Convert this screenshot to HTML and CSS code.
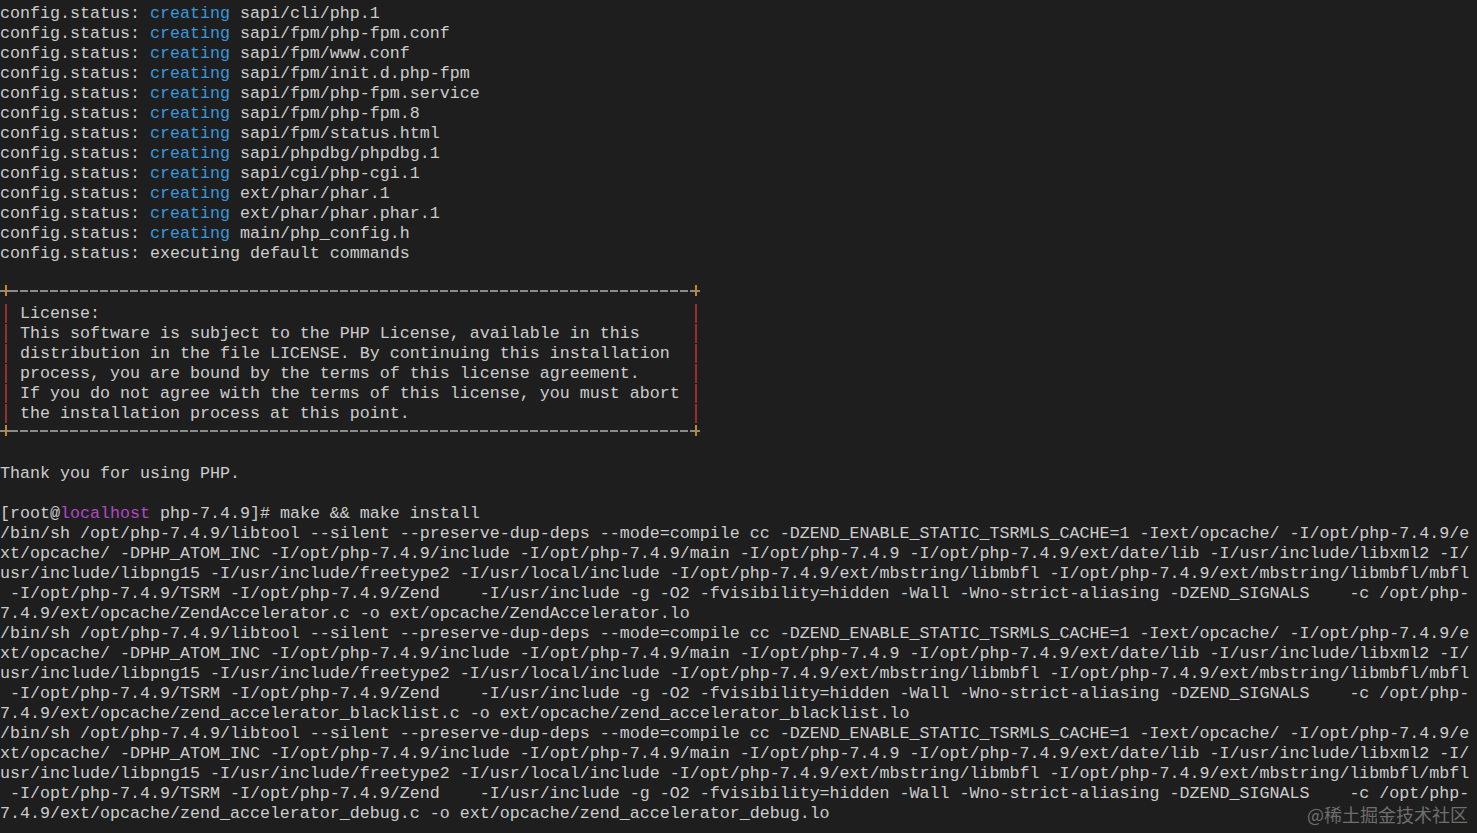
FILE: index.html
```html
<!DOCTYPE html>
<html lang="en">
<head>
<meta charset="utf-8">
<title>terminal</title>
<link rel="stylesheet" href="styles.css">
</head>
<body>
<main class="term">
<div class="line">config.status: <span class="cy">creating</span> sapi/cli/php.1</div>
<div class="line">config.status: <span class="cy">creating</span> sapi/fpm/php-fpm.conf</div>
<div class="line">config.status: <span class="cy">creating</span> sapi/fpm/www.conf</div>
<div class="line">config.status: <span class="cy">creating</span> sapi/fpm/init.d.php-fpm</div>
<div class="line">config.status: <span class="cy">creating</span> sapi/fpm/php-fpm.service</div>
<div class="line">config.status: <span class="cy">creating</span> sapi/fpm/php-fpm.8</div>
<div class="line">config.status: <span class="cy">creating</span> sapi/fpm/status.html</div>
<div class="line">config.status: <span class="cy">creating</span> sapi/phpdbg/phpdbg.1</div>
<div class="line">config.status: <span class="cy">creating</span> sapi/cgi/php-cgi.1</div>
<div class="line">config.status: <span class="cy">creating</span> ext/phar/phar.1</div>
<div class="line">config.status: <span class="cy">creating</span> ext/phar/phar.phar.1</div>
<div class="line">config.status: <span class="cy">creating</span> main/php_config.h</div>
<div class="line">config.status: executing default commands</div>
<div class="line"> </div>
<div class="line"><span class="plus"></span><span class="dash"></span><span class="plus"></span></div>
<div class="line"><span class="vb"></span> License:                                                           <span class="vb"></span></div>
<div class="line"><span class="vb"></span> This software is subject to the PHP License, available in this     <span class="vb"></span></div>
<div class="line"><span class="vb"></span> distribution in the file LICENSE. By continuing this installation  <span class="vb"></span></div>
<div class="line"><span class="vb"></span> process, you are bound by the terms of this license agreement.     <span class="vb"></span></div>
<div class="line"><span class="vb"></span> If you do not agree with the terms of this license, you must abort <span class="vb"></span></div>
<div class="line"><span class="vb"></span> the installation process at this point.                            <span class="vb"></span></div>
<div class="line"><span class="plus"></span><span class="dash"></span><span class="plus"></span></div>
<div class="line"> </div>
<div class="line">Thank you for using PHP.</div>
<div class="line"> </div>
<div class="line">[root@<span class="mg">localhost</span> php-7.4.9]# make &amp;&amp; make install</div>
<div class="line">/bin/sh /opt/php-7.4.9/libtool --silent --preserve-dup-deps --mode=compile cc -DZEND_ENABLE_STATIC_TSRMLS_CACHE=1 -Iext/opcache/ -I/opt/php-7.4.9/e</div>
<div class="line">xt/opcache/ -DPHP_ATOM_INC -I/opt/php-7.4.9/include -I/opt/php-7.4.9/main -I/opt/php-7.4.9 -I/opt/php-7.4.9/ext/date/lib -I/usr/include/libxml2 -I/</div>
<div class="line">usr/include/libpng15 -I/usr/include/freetype2 -I/usr/local/include -I/opt/php-7.4.9/ext/mbstring/libmbfl -I/opt/php-7.4.9/ext/mbstring/libmbfl/mbfl</div>
<div class="line"> -I/opt/php-7.4.9/TSRM -I/opt/php-7.4.9/Zend    -I/usr/include -g -O2 -fvisibility=hidden -Wall -Wno-strict-aliasing -DZEND_SIGNALS    -c /opt/php-</div>
<div class="line">7.4.9/ext/opcache/ZendAccelerator.c -o ext/opcache/ZendAccelerator.lo</div>
<div class="line">/bin/sh /opt/php-7.4.9/libtool --silent --preserve-dup-deps --mode=compile cc -DZEND_ENABLE_STATIC_TSRMLS_CACHE=1 -Iext/opcache/ -I/opt/php-7.4.9/e</div>
<div class="line">xt/opcache/ -DPHP_ATOM_INC -I/opt/php-7.4.9/include -I/opt/php-7.4.9/main -I/opt/php-7.4.9 -I/opt/php-7.4.9/ext/date/lib -I/usr/include/libxml2 -I/</div>
<div class="line">usr/include/libpng15 -I/usr/include/freetype2 -I/usr/local/include -I/opt/php-7.4.9/ext/mbstring/libmbfl -I/opt/php-7.4.9/ext/mbstring/libmbfl/mbfl</div>
<div class="line"> -I/opt/php-7.4.9/TSRM -I/opt/php-7.4.9/Zend    -I/usr/include -g -O2 -fvisibility=hidden -Wall -Wno-strict-aliasing -DZEND_SIGNALS    -c /opt/php-</div>
<div class="line">7.4.9/ext/opcache/zend_accelerator_blacklist.c -o ext/opcache/zend_accelerator_blacklist.lo</div>
<div class="line">/bin/sh /opt/php-7.4.9/libtool --silent --preserve-dup-deps --mode=compile cc -DZEND_ENABLE_STATIC_TSRMLS_CACHE=1 -Iext/opcache/ -I/opt/php-7.4.9/e</div>
<div class="line">xt/opcache/ -DPHP_ATOM_INC -I/opt/php-7.4.9/include -I/opt/php-7.4.9/main -I/opt/php-7.4.9 -I/opt/php-7.4.9/ext/date/lib -I/usr/include/libxml2 -I/</div>
<div class="line">usr/include/libpng15 -I/usr/include/freetype2 -I/usr/local/include -I/opt/php-7.4.9/ext/mbstring/libmbfl -I/opt/php-7.4.9/ext/mbstring/libmbfl/mbfl</div>
<div class="line"> -I/opt/php-7.4.9/TSRM -I/opt/php-7.4.9/Zend    -I/usr/include -g -O2 -fvisibility=hidden -Wall -Wno-strict-aliasing -DZEND_SIGNALS    -c /opt/php-</div>
<div class="line">7.4.9/ext/opcache/zend_accelerator_debug.c -o ext/opcache/zend_accelerator_debug.lo</div>
</main>
<div class="wm">@稀土掘金技术社区</div>
</body>
</html>
```

FILE: styles.css
```css
html, body {
  margin: 0;
  padding: 0;
  background: #1e1e1e;
}
body {
  position: relative;
  width: 1477px;
  height: 833px;
  overflow: hidden;
}
.term {
  padding-top: 4px;
  font-family: "Liberation Mono", "DejaVu Sans Mono", monospace;
  font-size: 16.666px;
  line-height: 20px;
  color: #cccccc;
}
.line {
  height: 20px;
  white-space: pre;
}
.cy { color: #3a96dd; }
.mg { color: #b148c6; }
.plus, .dash, .vb {
  display: inline-block;
  height: 20px;
  vertical-align: top;
}
.plus {
  width: 10px;
  background:
    linear-gradient(#c7861f, #c7861f) 5px 1px / 2px 11px no-repeat,
    linear-gradient(#8a8a8a, #8a8a8a) 0 6px / 10px 2px no-repeat;
}
.dash {
  width: 680px;
  background: repeating-linear-gradient(to right, #8a8a8a 0 8px, transparent 8px 10px) 0 6px / 100% 2px no-repeat;
}
.vb {
  width: 10px;
  background: linear-gradient(#9a2e2e, #9a2e2e) 5px 0 / 2px 19px no-repeat;
}
.wm {
  position: absolute;
  right: 9px;
  top: 803px;
  font-family: "Noto Sans CJK SC", sans-serif;
  font-size: 18px;
  line-height: 22px;
  color: #6e6e6e;
}
```
